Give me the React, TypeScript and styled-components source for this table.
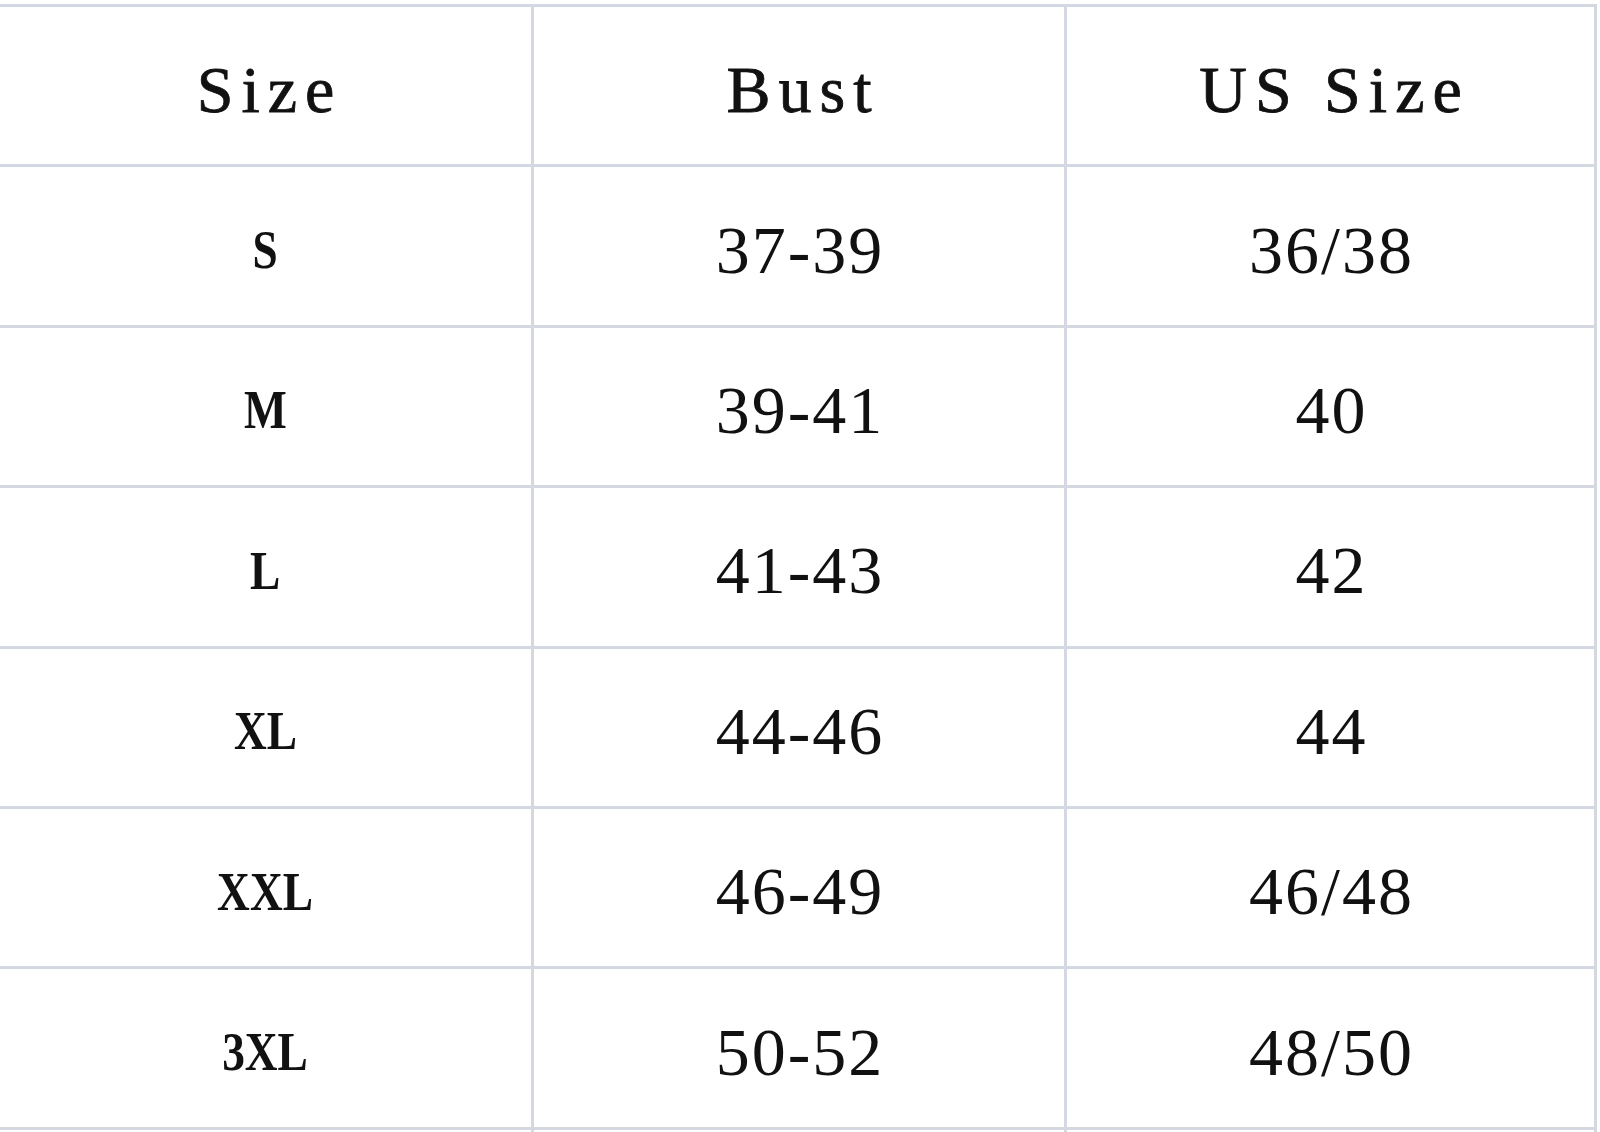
import React from "react";
import styled, { createGlobalStyle } from "styled-components";

const GlobalStyle = createGlobalStyle`
  html, body {
    margin: 0;
    padding: 0;
    background: #ffffff;
  }
`;

const Page = styled.div`
  width: 1600px;
  height: 1132px;
  overflow: hidden;
  padding-top: 4px;
  box-sizing: border-box;
  background: #ffffff;
`;

const Grid = styled.div`
  display: grid;
  grid-template-columns: 531px 530px 527px;
  grid-auto-rows: 157.4px;
  gap: 3px;
  padding: 3px 3px 0 0;
  width: max-content;
  background: #d3d8e2;
`;

const Cell = styled.div`
  background: #ffffff;
  display: flex;
  align-items: center;
  justify-content: center;
  color: #111111;
  font-family: "Liberation Serif", "Times New Roman", serif;
  padding-top: 8px;
  box-sizing: border-box;
`;

const HeadCell = styled(Cell)`
  font-size: 66px;
  letter-spacing: 8px;
  padding-left: 8px;
  -webkit-text-stroke: 0.8px #111111;
`;

const SizeLabel = styled.span`
  display: inline-block;
  font-size: 54px;
  font-weight: 700;
  transform: scaleX(0.84);
`;

const ValueCell = styled(Cell)`
  font-size: 68px;
  letter-spacing: 2px;
  padding-left: 2px;
`;

const Stub = styled.div`
  background: #ffffff;
  height: 8px;
`;

type Row = { size: string; bust: string; us: string };

const rows: Row[] = [
  { size: "S", bust: "37-39", us: "36/38" },
  { size: "M", bust: "39-41", us: "40" },
  { size: "L", bust: "41-43", us: "42" },
  { size: "XL", bust: "44-46", us: "44" },
  { size: "XXL", bust: "46-49", us: "46/48" },
  { size: "3XL", bust: "50-52", us: "48/50" },
];

const App: React.FC = () => (
  <Page>
    <GlobalStyle />
    <Grid>
      <HeadCell>Size</HeadCell>
      <HeadCell>Bust</HeadCell>
      <HeadCell>US Size</HeadCell>
      {rows.map((row) => (
        <React.Fragment key={row.size}>
          <Cell>
            <SizeLabel>{row.size}</SizeLabel>
          </Cell>
          <ValueCell>{row.bust}</ValueCell>
          <ValueCell>{row.us}</ValueCell>
        </React.Fragment>
      ))}
      <Stub />
      <Stub />
      <Stub />
    </Grid>
  </Page>
);

export default App;
